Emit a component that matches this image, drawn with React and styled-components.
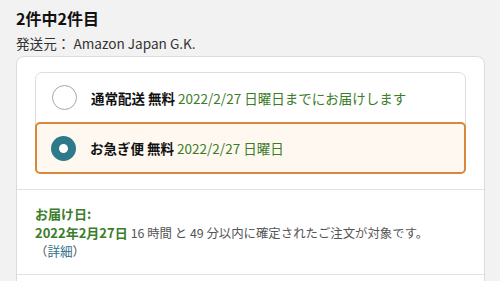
import React from "react";
import styled, { createGlobalStyle } from "styled-components";

const Global = createGlobalStyle`
  html, body { margin: 0; padding: 0; }
  body {
    background: #f2f2f2;
    font-family: "Noto Sans CJK JP", "Noto Sans", sans-serif;
    color: #111;
    width: 500px;
    height: 281px;
    overflow: hidden;
  }
`;

const Page = styled.div`
  padding: 6px 15px 0 16px;
`;

const Title = styled.h2`
  margin: 0;
  font-size: 16px;
  font-weight: 700;
  line-height: 24px;
`;

const Seller = styled.div`
  font-size: 13.6px;
  line-height: 20px;
  color: #333;
  margin-top: 3px;
`;

const Card = styled.div`
  margin-top: 3px;
  background: #fff;
  border: 1px solid #dcdcdc;
  border-radius: 8px;
`;

const OptionsSection = styled.div`
  padding: 15px 18px 15px;
  border-bottom: 1px solid #e2e2e2;
`;

const OptionList = styled.div`
  border: 1px solid #dedede;
  border-radius: 7px;
  display: flex;
  flex-direction: column;
`;

const Option = styled.div`
  display: flex;
  align-items: center;
  gap: 14px;
  height: ${(p) => (p.$selected ? "48px" : "45px")};
  padding: 0 14px;
  margin: ${(p) => (p.$selected ? "0 -1px -1px" : "0")};
  border: ${(p) => (p.$selected ? "2px solid #d8873e" : "2px solid transparent")};
  border-radius: ${(p) => (p.$selected ? "5px" : "7px")};
  background: ${(p) => (p.$selected ? "#fef8f0" : "transparent")};
`;

const Radio = styled.span`
  flex: none;
  box-sizing: border-box;
  width: 25px;
  height: 25px;
  border-radius: 50%;
  border: ${(p) => (p.$checked ? "8px solid #2f7a8a" : "1.5px solid #a8a8a8")};
  background: #fff;
`;

const OptionText = styled.div`
  font-size: 13.5px;
  line-height: 20px;
  white-space: nowrap;
`;

const Strong = styled.span`
  font-weight: 700;
  color: #111;
`;

const Green = styled.span`
  color: #3b7d29;
  font-weight: ${(p) => (p.$bold ? 700 : 400)};
`;

const DeliverySection = styled.div`
  padding: 15px 18px 13px;
  border-bottom: 1px solid #e2e2e2;
  font-size: 13px;
  line-height: 18.5px;
  white-space: nowrap;
`;

const Label = styled.div`
  font-weight: 700;
  color: #3b7d29;
`;

const Gray = styled.span`
  color: #555;
  font-size: 12.4px;
`;

const Link = styled.a`
  color: #2d6f8a;
  text-decoration: none;
  font-size: 12.6px;
`;

const Spacer = styled.div`
  height: 40px;
`;

export default function App() {
  return (
    <>
      <Global />
      <Page>
        <Title>2件中2件目</Title>
        <Seller>発送元： Amazon Japan G.K.</Seller>
        <Card>
          <OptionsSection>
            <OptionList>
              <Option>
                <Radio />
                <OptionText>
                  <Strong>通常配送 無料</Strong> <Green>2022/2/27 日曜日までにお届けします</Green>
                </OptionText>
              </Option>
              <Option $selected>
                <Radio $checked />
                <OptionText>
                  <Strong>お急ぎ便 無料</Strong> <Green>2022/2/27 日曜日</Green>
                </OptionText>
              </Option>
            </OptionList>
          </OptionsSection>
          <DeliverySection>
            <Label>お届け日:</Label>
            <div>
              <Green $bold>2022年2月27日</Green>{" "}
              <Gray>16 時間 と 49 分以内に確定されたご注文が対象です。</Gray>
            </div>
            <div>
              <Gray>（</Gray>
              <Link href="#">詳細</Link>
              <Gray>）</Gray>
            </div>
          </DeliverySection>
          <Spacer />
        </Card>
      </Page>
    </>
  );
}
